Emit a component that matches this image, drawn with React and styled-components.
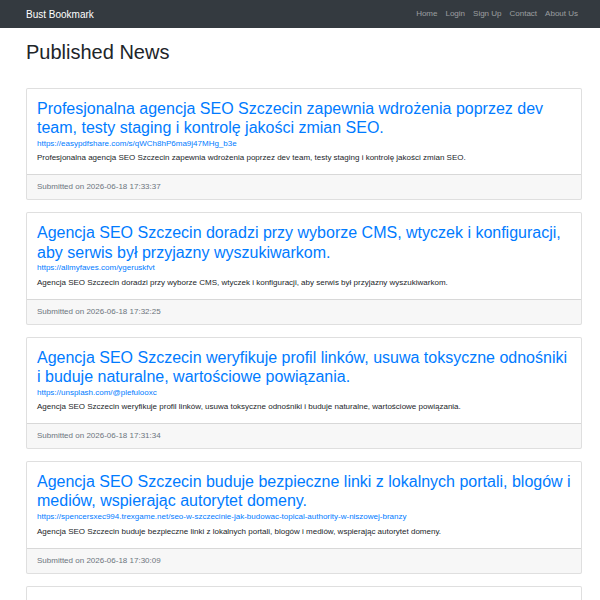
import React from 'react';
import styled, { createGlobalStyle } from 'styled-components';

const GlobalStyle = createGlobalStyle`
  * { box-sizing: border-box; }
  body {
    margin: 0;
    background: #fff;
    font-family: "Liberation Sans", Arial, sans-serif;
    font-size: 8px;
    line-height: 1.5;
    color: #212529;
  }
`;

const Navbar = styled.nav`
  background: #343a40;
  padding: 4px 0;
`;

const Container = styled.div`
  width: 556px;
  margin-left: 26px;
`;

const NavInner = styled(Container)`
  display: flex;
  align-items: center;
  justify-content: space-between;
`;

const Brand = styled.a`
  font-size: 10px;
  line-height: 15px;
  padding: 2.5px 0;
  color: #fff;
  text-decoration: none;
`;

const NavLinks = styled.ul`
  display: flex;
  list-style: none;
  margin: 0;
  padding: 0;
`;

const NavLink = styled.a`
  display: block;
  padding: 4px;
  color: rgba(255, 255, 255, 0.5);
  text-decoration: none;
`;

const Heading = styled.h1`
  font-size: 20px;
  font-weight: 500;
  line-height: 1.2;
  margin: 12px 0 24px;
`;

const Card = styled.div`
  border: 1px solid rgba(0, 0, 0, 0.125);
  border-radius: 2px;
  margin-bottom: 12px;
  background: #fff;
`;

const CardBody = styled.div`
  padding: 10px;
`;

const Title = styled.h2`
  font-size: 16px;
  font-weight: 500;
  line-height: 1.2;
  margin: 0;
  a {
    color: #007bff;
    text-decoration: none;
  }
`;

const Url = styled.a`
  display: block;
  margin-top: 0.5px;
  color: #007bff;
  text-decoration: none;
`;

const Text = styled.p`
  margin: 2.5px 0 0;
`;

const CardFooter = styled.div`
  padding: 6px 10px;
  background: rgba(0, 0, 0, 0.03);
  border-top: 1px solid rgba(0, 0, 0, 0.125);
  color: #6c757d;
`;

const news = [
  {
    title: 'Profesjonalna agencja SEO Szczecin zapewnia wdrożenia poprzez dev team, testy staging i kontrolę jakości zmian SEO.',
    url: 'https://easypdfshare.com/s/qWCh8hP6ma9j47MHg_b3e',
    date: '2026-06-18 17:33:37',
  },
  {
    title: 'Agencja SEO Szczecin doradzi przy wyborze CMS, wtyczek i konfiguracji, aby serwis był przyjazny wyszukiwarkom.',
    url: 'https://allmyfaves.com/ygeruskfvt',
    date: '2026-06-18 17:32:25',
  },
  {
    title: 'Agencja SEO Szczecin weryfikuje profil linków, usuwa toksyczne odnośniki i buduje naturalne, wartościowe powiązania.',
    url: 'https://unsplash.com/@plefulooxc',
    date: '2026-06-18 17:31:34',
  },
  {
    title: 'Agencja SEO Szczecin buduje bezpieczne linki z lokalnych portali, blogów i mediów, wspierając autorytet domeny.',
    url: 'https://spencersxec994.trexgame.net/seo-w-szczecinie-jak-budowac-topical-authority-w-niszowej-branzy',
    date: '2026-06-18 17:30:09',
  },
  {
    title: 'Agencja SEO Szczecin przygotuje strategię treści opartą na intencjach użytkowników i analizie konkurencji.',
    url: 'https://example.com/',
    date: '2026-06-18 17:29:12',
  },
];

const links = ['Home', 'Login', 'Sign Up', 'Contact', 'About Us'];

export default function App() {
  return (
    <>
      <GlobalStyle />
      <Navbar>
        <NavInner>
          <Brand href="#">Bust Bookmark</Brand>
          <NavLinks>
            {links.map(l => (
              <li key={l}>
                <NavLink href="#">{l}</NavLink>
              </li>
            ))}
          </NavLinks>
        </NavInner>
      </Navbar>
      <Container>
        <Heading>Published News</Heading>
        {news.map((item, idx) => (
          <Card key={idx}>
            <CardBody>
              <Title>
                <a href="#">{item.title}</a>
              </Title>
              <Url href="#">{item.url}</Url>
              <Text>{item.title}</Text>
            </CardBody>
            <CardFooter>Submitted on {item.date}</CardFooter>
          </Card>
        ))}
      </Container>
    </>
  );
}
